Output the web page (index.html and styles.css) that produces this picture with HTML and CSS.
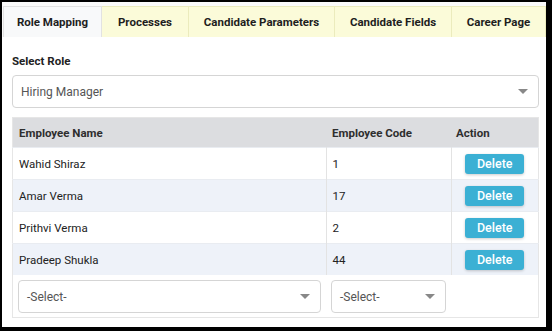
FILE: index.html
```html
<!DOCTYPE html>
<html lang="en">
<head>
  <meta charset="UTF-8" />
  <title>Role Mapping</title>
  <link rel="stylesheet" href="styles.css">
</head>
<body>
  <div class="frame">
    <ul class="tabs">
      <li class="tab active">Role Mapping</li>
      <li class="tab">Processes</li>
      <li class="tab">Candidate Parameters</li>
      <li class="tab">Candidate Fields</li>
      <li class="tab">Career Page</li>
    </ul>

    <div class="tab-body">
      <label class="field-label">Select Role</label>
      <div class="select role-select">
        <span>Hiring Manager</span>
        <span class="caret"></span>
      </div>

      <table class="grid">
        <thead>
          <tr>
            <th class="col-name">Employee Name</th>
            <th class="col-code">Employee Code</th>
            <th class="col-action">Action</th>
          </tr>
        </thead>
        <tbody>
          <tr>
            <td>Wahid Shiraz</td>
            <td>1</td>
            <td class="action"><button class="btn-delete">Delete</button></td>
          </tr>
          <tr>
            <td>Amar Verma</td>
            <td>17</td>
            <td class="action"><button class="btn-delete">Delete</button></td>
          </tr>
          <tr>
            <td>Prithvi Verma</td>
            <td>2</td>
            <td class="action"><button class="btn-delete">Delete</button></td>
          </tr>
          <tr>
            <td>Pradeep Shukla</td>
            <td>44</td>
            <td class="action"><button class="btn-delete">Delete</button></td>
          </tr>
        </tbody>
        <tfoot>
          <tr>
            <td class="foot-name">
              <div class="select"><span>-Select-</span><span class="caret"></span></div>
            </td>
            <td class="foot-code">
              <div class="select"><span>-Select-</span><span class="caret"></span></div>
            </td>
            <td></td>
          </tr>
        </tfoot>
      </table>
    </div>
  </div>
</body>
</html>
```

FILE: styles.css
```css
body {
  margin: 0;
  background: #000;
  font-family: Roboto, 'Liberation Sans', sans-serif;
  color: #222;
  font-size: 11.5px;
}

.frame {
  margin: 2px 6px 4px 2px;
  height: 325px;
  background: #fff;
}

/* tabs */
.tabs {
  list-style: none;
  margin: 0;
  padding: 4px 0 0 1px;
  display: flex;
  background: #fafafa;
}

.tab {
  height: 31px;
  line-height: 31px;
  padding: 0;
  white-space: nowrap;
  text-align: center;
  font-weight: bold;
  font-size: 11.5px;
  color: #1e1e1e;
  background: #fbfbd9;
  border-right: 1px solid #ebebbd;
  border-top: 1px solid #ebebbd;
  box-sizing: border-box;
}

.tab:nth-child(2) { width: 87px; }
.tab:nth-child(3) { width: 146px; }
.tab:nth-child(4) { width: 117px; }
.tab:nth-child(5) { width: 94px; }

.tab.active {
  width: 99px;
  background: #f8f9fa;
  border: 1px solid #e2e2e2;
  border-bottom: none;
}

.tab-body {
  padding: 15px 7px 0 10px;
}

.field-label {
  display: block;
  font-weight: bold;
  font-size: 11.5px;
  line-height: 18px;
  margin-bottom: 5px;
}

.select {
  display: flex;
  align-items: center;
  justify-content: space-between;
  height: 33px;
  box-sizing: border-box;
  border: 1px solid #d5d5d5;
  border-radius: 4px;
  padding: 0 10px 0 8px;
  color: #555;
  font-size: 12px;
  background: #fff;
}

.caret {
  width: 0;
  height: 0;
  border-left: 5px solid transparent;
  border-right: 5px solid transparent;
  border-top: 5px solid #888;
}

.role-select {
  margin-bottom: 9px;
}

/* grid */
.grid {
  width: 100%;
  border-collapse: collapse;
  border: 1px solid #e6e6e6;
  font-size: 11.5px;
}

.grid th {
  background: #dcdde0;
  color: #2e2e2e;
  font-weight: bold;
  text-align: left;
  height: 29px;
  padding: 0 6px;
}

.col-name { width: 301px; }
.col-code { width: 112px; }

.grid th.col-action {
  padding-left: 5px;
}

.grid tbody td {
  height: 31px;
  padding: 0 6px;
  border-right: 1px solid #e3e3e3;
  border-top: 1px solid #e9ecf1;
}

.grid tbody td:last-child {
  border-right: none;
}

.grid tbody tr:nth-child(even) td {
  background: #eef2f9;
}

.action {
  text-align: center;
}

.btn-delete {
  width: 59px;
  height: 20px;
  border: none;
  border-radius: 3px;
  background: #3bb0d4;
  color: #fff;
  font-family: Roboto, 'Liberation Sans', sans-serif;
  font-size: 12.5px;
  font-weight: 500;
  box-shadow: 0 1px 3px rgba(0, 0, 0, 0.2);
  cursor: pointer;
}

.grid tfoot td {
  padding: 5px 5px 4px 5px;
}

.foot-code .select {
  width: 115px;
}
```
